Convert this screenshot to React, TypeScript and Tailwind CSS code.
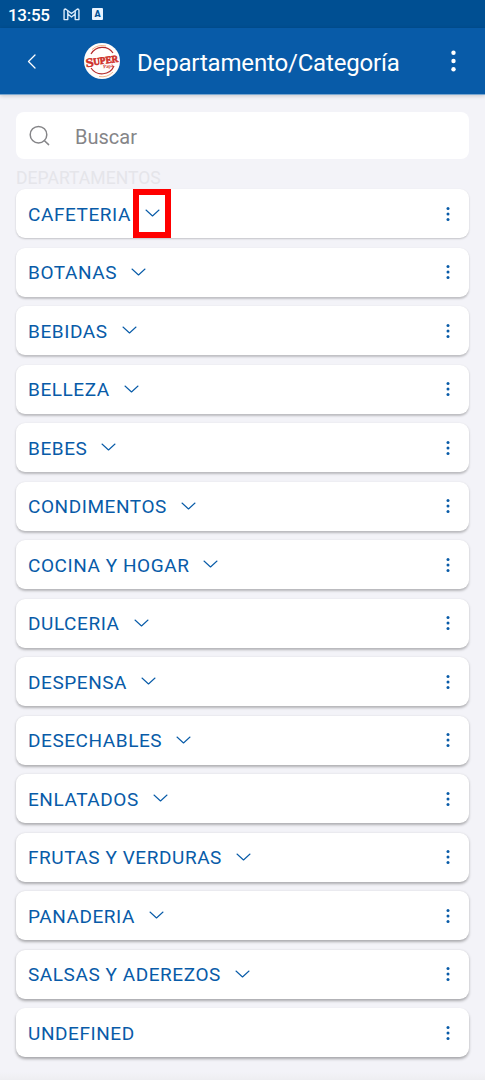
const departments = [
  'CAFETERIA', 'BOTANAS', 'BEBIDAS', 'BELLEZA', 'BEBES', 'CONDIMENTOS', 'COCINA Y HOGAR', 'DULCERIA',
  'DESPENSA', 'DESECHABLES', 'ENLATADOS', 'FRUTAS Y VERDURAS', 'PANADERIA', 'SALSAS Y ADEREZOS', 'UNDEFINED',
];

function StatusBar() {
  return (
    <div className="flex h-7 items-center bg-[#004f92] pl-2 text-white">
      <span className="w-[55px] pt-[2px] text-[17px] leading-none font-medium tracking-[-0.3px]">13:55</span>
      <svg className="h-[13px] w-[17px]" viewBox="0 0 18 14" fill="none" stroke="#d9eafa" strokeWidth="1.5" strokeLinejoin="round">
        <path d="M1 2.5Q1 1 2.6 1L9 6L15.4 1Q17 1 17 2.5V12.5H13V6.5L9 9.7L5 6.5V12.5H1Z" />
        <path d="M5 6.5V3M13 6.5V3" />
      </svg>
      <span className="ml-3 flex h-3 w-[11px] items-center justify-center rounded-[1px] bg-[#e8f3ff] text-[9px] leading-none font-black text-[#004f92]">A</span>
    </div>
  );
}

function Logo() {
  return (
    <svg className="ml-[47px] size-9" viewBox="0 0 36 36">
      <circle cx="18" cy="18" r="18" fill="#fffdfb" />
      <path d="M7 11A13 13 0 0 1 29 10M30 23A13.2 13.2 0 0 1 7 25" fill="none" stroke="#b52b2b" strokeWidth="1.2" />
      <path d="M8 6.5A15.5 15.5 0 0 1 22 3M29 29A15.5 15.5 0 0 1 15 33.5" fill="none" stroke="#eda16f" strokeWidth=".8" />
      <g transform="rotate(-8 18 18)" fill="#cf3028" fontFamily="Liberation Serif, serif" fontWeight="bold">
        <text x="1.6" y="22" fontSize="12.5" textLength="8" lengthAdjust="spacingAndGlyphs" stroke="#cf3028" strokeWidth=".5">S</text>
        <text x="9.3" y="21" fontSize="10" textLength="25" lengthAdjust="spacingAndGlyphs" stroke="#cf3028" strokeWidth=".6">UPER</text>
        <text x="18.5" y="25.5" fontSize="5" textLength="10" lengthAdjust="spacingAndGlyphs">Papá</text>
      </g>
    </svg>
  );
}

function Department({ name, index }: { name: string; index: number }) {
  const depth = index / 14;
  return (
    <li
      className="flex h-[49px] shrink-0 items-center rounded-[9px] bg-white pr-[19px] pl-3 text-[#085ba8]"
      style={{ boxShadow: `0 ${1 + depth}px ${2 + depth}px rgba(0,0,0,${0.2 + depth * 0.12})` }}
    >
      <span className="pt-[1.5px] text-[19px] leading-none tracking-[0.56px]">{name}</span>
      {name !== 'UNDEFINED' && (
        <span className="relative ml-[14px] flex pb-px">
          <svg className="h-2 w-[15px]" viewBox="0 0 15 8" fill="none" stroke="currentColor" strokeWidth="1.1" strokeLinecap="round" strokeLinejoin="round">
            <path d="M1 1L7.5 7L14 1" />
          </svg>
          {index === 0 && <span className="absolute -top-5 -left-3 h-[49px] w-[38px] border-6 border-[#ff0000]" />}
        </span>
      )}
      <svg className="ml-auto h-4 w-1" viewBox="0 0 4 16" fill="currentColor">
        <circle cx="2" cy="2.5" r="1.5" />
        <circle cx="2" cy="8" r="1.5" />
        <circle cx="2" cy="13.5" r="1.5" />
      </svg>
    </li>
  );
}

export default function App() {
  return (
    <div className="flex h-[1080px] w-[485px] flex-col overflow-hidden bg-[#f3f3f8] font-['Roboto',sans-serif]">
      <StatusBar />
      <header className="flex h-[67px] shrink-0 items-center border-b border-[#79a6d0] bg-[#085ba8] pl-[27px] text-white shadow-[0_1px_4px_rgba(0,0,0,0.18)]">
        <svg className="h-[15px] w-[10px]" viewBox="0 0 10 15" fill="none" stroke="currentColor" strokeWidth="1.3" strokeLinecap="round" strokeLinejoin="round">
          <path d="M8 1L1.5 7.5L8 14" />
        </svg>
        <Logo />
        <h1 className="ml-[17px] pt-[3px] text-[24px] leading-none font-normal tracking-[-0.17px]">Departamento/Categoría</h1>
        <svg className="mr-[29px] ml-auto h-[22px] w-[5px]" viewBox="0 0 5 22" fill="currentColor">
          <circle cx="2.5" cy="2.7" r="2.2" />
          <circle cx="2.5" cy="11" r="2.2" />
          <circle cx="2.5" cy="19.3" r="2.2" />
        </svg>
      </header>
      <main className="flex flex-col px-4 pt-[17px]">
        <div className="flex h-[47px] items-center rounded-[8px] bg-white pl-[13px] text-[#858588]">
          <svg className="size-[21px]" viewBox="0 0 21 21" fill="none" stroke="currentColor" strokeWidth="1.5" strokeLinecap="round">
            <circle cx="9.5" cy="9.7" r="8.3" />
            <path d="M15.5 15.8L19.6 19.6" />
          </svg>
          <span className="ml-[25px] pt-[2px] text-[20px] leading-none">Buscar</span>
        </div>
        <div className="flex h-[30px] items-end pb-[2px] text-[17.5px] leading-none tracking-[0.05px] text-[#e5e5ea]">DEPARTAMENTOS</div>
        <ul className="flex flex-col gap-[9.5px]">
          {departments.map((name, index) => <Department key={name} name={name} index={index} />)}
        </ul>
      </main>
      <div className="mt-auto h-2 shrink-0 bg-linear-to-b from-[#f3f3f8] to-[#eeeef1]" />
    </div>
  );
}
